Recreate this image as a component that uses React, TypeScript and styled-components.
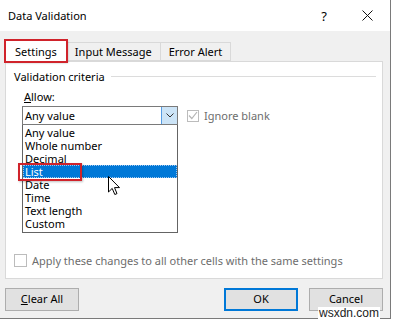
import React from "react";
import styled, { createGlobalStyle } from "styled-components";

const GlobalStyle = createGlobalStyle`
  html, body {
    margin: 0;
    padding: 0;
    background: #ffffff;
  }
  body {
    font-family: "Noto Sans", "Open Sans", sans-serif;
    font-size: 11px;
    color: #000;
  }
`;

//#region Styled components

const Window = styled.div`
  position: relative;
  width: 390px;
  height: 318px;
  background: #f0f0f0;
  border-right: 1px solid #7a7a7a;
  border-bottom: 1px solid #7a7a7a;
  display: flex;
  flex-direction: column;
`;

const TitleBar = styled.div`
  height: 31px;
  background: #ffffff;
  display: flex;
  align-items: center;
  padding-left: 8px;
  font-size: 11px;
`;

const Title = styled.div`
  flex: 1;
`;

const HelpGlyph = styled.div`
  width: 10px;
  margin-right: 33px;
  font-size: 13px;
  text-align: center;
`;

const CloseIcon = styled.svg`
  margin-right: 17px;
`;

const Body = styled.div`
  padding: 8px 0 0 5px;
`;

const TabStrip = styled.div`
  display: flex;
  align-items: flex-end;
  height: 22px;
  padding-left: 1px;
`;

const Tab = styled.div<{ $active?: boolean }>`
  position: relative;
  height: ${(p) => (p.$active ? "22px" : "19px")};
  box-sizing: border-box;
  padding: 0 ${(p) => (p.$active ? "9px" : "8px")};
  display: flex;
  align-items: center;
  background: ${(p) => (p.$active ? "#ffffff" : "#f0f0f0")};
  border: 1px solid #d9d9d9;
  border-bottom: ${(p) => (p.$active ? "none" : "1px solid #d9d9d9")};
  margin-bottom: ${(p) => (p.$active ? "-1px" : "0")};
  margin-left: -1px;
  z-index: ${(p) => (p.$active ? 1 : 0)};
  outline: ${(p) => (p.$active ? "2px solid #d0232b" : "none")};
  outline-offset: -1px;
  box-shadow: ${(p) => (p.$active ? "1px 1px 2px rgba(0,0,0,0.25)" : "none")};
`;

const Panel = styled.div`
  width: 378px;
  height: 218px;
  box-sizing: border-box;
  background: #ffffff;
  border: 1px solid #d9d9d9;
  display: flex;
  flex-direction: column;
`;

const GroupHeader = styled.div`
  display: flex;
  align-items: center;
  height: 14px;
  margin-top: 7px;
  padding-left: 8px;
  padding-right: 6px;
`;

const GroupLine = styled.div`
  flex: 1;
  height: 1px;
  background: #dcdcdc;
  margin-left: 6px;
`;

const FieldLabel = styled.div`
  height: 14px;
  line-height: 14px;
  margin-top: 7px;
  padding-left: 18px;
`;

const Underline = styled.span`
  text-decoration: underline;
`;

const ComboRow = styled.div`
  display: flex;
  align-items: center;
  margin-top: 2px;
  padding-left: 16px;
  gap: 9px;
`;

const ComboWrap = styled.div`
  position: relative;
`;

const Combo = styled.div`
  width: 156px;
  height: 19px;
  box-sizing: border-box;
  border: 1px solid #7a7a7a;
  display: flex;
  align-items: stretch;
  background: #ffffff;
`;

const ComboText = styled.div`
  flex: 1;
  padding-left: 2px;
  line-height: 17px;
`;

const ComboButton = styled.div`
  width: 15px;
  background: #cce4f7;
  border-left: 1px solid #569de5;
  display: flex;
  align-items: center;
  justify-content: center;
`;

const DropList = styled.div`
  position: absolute;
  top: 100%;
  left: 0;
  width: 156px;
  box-sizing: border-box;
  padding: 1px 0 2px;
  background: #ffffff;
  border: 1px solid #646464;
  border-top: none;
  z-index: 5;
`;

const DropItem = styled.div<{ $selected?: boolean }>`
  height: 13px;
  line-height: 13px;
  padding-left: 2px;
  box-sizing: border-box;
  background: ${(p) => (p.$selected ? "#0078d7" : "transparent")};
  color: ${(p) => (p.$selected ? "#ffffff" : "#000000")};
  outline: ${(p) => (p.$selected ? "1px dotted #9fc6ee" : "none")};
  outline-offset: -1px;
`;

const Highlight = styled.div`
  position: absolute;
  left: -5px;
  top: 38px;
  width: 64px;
  height: 18px;
  box-sizing: border-box;
  border: 2px solid #d0232b;
  box-shadow: 1px 1px 2px rgba(0, 0, 0, 0.25);
`;

const Pointer = styled.svg`
  position: absolute;
  left: 85px;
  top: 51px;
`;

const CheckRow = styled.label<{ $left?: number }>`
  display: flex;
  align-items: center;
  gap: 5px;
  color: #6d6d6d;
  padding-left: ${(p) => p.$left ?? 0}px;
`;

const CheckBox = styled.div<{ $size: number }>`
  width: ${(p) => p.$size}px;
  height: ${(p) => p.$size}px;
  box-sizing: border-box;
  border: 1px solid #bcbcbc;
  background: #ffffff;
  display: flex;
  align-items: center;
  justify-content: center;
`;

const ApplyRow = styled.div`
  margin-top: auto;
  padding-bottom: 10px;
`;

const ButtonRow = styled.div`
  display: flex;
  width: 378px;
  margin-top: 9px;
`;

const Button = styled.button<{ $primary?: boolean; $gap?: number }>`
  width: 74px;
  height: 23px;
  box-sizing: border-box;
  margin-left: ${(p) => p.$gap ?? 0}px;
  font: inherit;
  font-size: 11px;
  line-height: 17px;
  color: #000;
  background: #e1e1e1;
  border: 1px solid ${(p) => (p.$primary ? "#0078d7" : "#adadad")};
  box-shadow: ${(p) => (p.$primary ? "inset 0 0 0 1px #0078d7" : "none")};
  padding: 0 0 2px;
`;

const Spacer = styled.div`
  flex: 1;
`;

const Watermark = styled.div`
  position: absolute;
  left: 318px;
  top: 307px;
  padding: 0 1px;
  height: 12px;
  line-height: 12px;
  background: #ffffff;
  font-family: "Liberation Sans", Arial, sans-serif;
  font-size: 12px;
  color: #222;
`;

//#endregion

const allowOptions = [
  "Any value",
  "Whole number",
  "Decimal",
  "List",
  "Date",
  "Time",
  "Text length",
  "Custom",
];

const App: React.FC = () => {
  return (
    <>
      <GlobalStyle />
      <Window>
        <TitleBar>
          <Title>Data Validation</Title>
          <HelpGlyph>?</HelpGlyph>
          <CloseIcon width="11" height="11" viewBox="0 0 11 11">
            <path d="M0.5 0.5 L10.5 10.5 M10.5 0.5 L0.5 10.5" stroke="#111" strokeWidth="1" />
          </CloseIcon>
        </TitleBar>
        <Body>
          <TabStrip>
            <Tab $active>Settings</Tab>
            <Tab>Input Message</Tab>
            <Tab>Error Alert</Tab>
          </TabStrip>
          <Panel>
            <GroupHeader>
              Validation criteria
              <GroupLine />
            </GroupHeader>
            <FieldLabel>
              <Underline>A</Underline>llow:
            </FieldLabel>
            <ComboRow>
              <ComboWrap>
                <Combo>
                  <ComboText>Any value</ComboText>
                  <ComboButton>
                    <svg width="8" height="5" viewBox="0 0 8 5">
                      <path d="M0.5 0.5 L4 4 L7.5 0.5" fill="none" stroke="#333" strokeWidth="1" />
                    </svg>
                  </ComboButton>
                </Combo>
                <DropList>
                  {allowOptions.map((opt) => (
                    <DropItem key={opt} $selected={opt === "List"}>
                      {opt}
                    </DropItem>
                  ))}
                  <Highlight />
                  <Pointer width="13" height="20" viewBox="0 0 13 20">
                    <path
                      d="M0.5 0.5 L0.5 16 L4.2 12.4 L6.8 18.5 L9 17.6 L6.5 11.6 L11.5 11.6 Z"
                      fill="#fff"
                      stroke="#000"
                      strokeWidth="1"
                      strokeLinejoin="round"
                    />
                  </Pointer>
                </DropList>
              </ComboWrap>
              <CheckRow>
                <CheckBox $size={12}>
                  <svg width="10" height="9" viewBox="0 0 10 9">
                    <path d="M1 4.5 L3.8 7.5 L9 1" fill="none" stroke="#b5b5b5" strokeWidth="1.2" />
                  </svg>
                </CheckBox>
                Ignore blank
              </CheckRow>
            </ComboRow>
            <ApplyRow>
              <CheckRow $left={8}>
                <CheckBox $size={13} />
                Apply these changes to all other cells with the same settings
              </CheckRow>
            </ApplyRow>
          </Panel>
          <ButtonRow>
            <Button>
              <Underline>C</Underline>lear All
            </Button>
            <Spacer />
            <Button $primary>OK</Button>
            <Button $gap={11}>Cancel</Button>
          </ButtonRow>
        </Body>
        <Watermark>wsxdn.com</Watermark>
      </Window>
    </>
  );
};

export default App;
